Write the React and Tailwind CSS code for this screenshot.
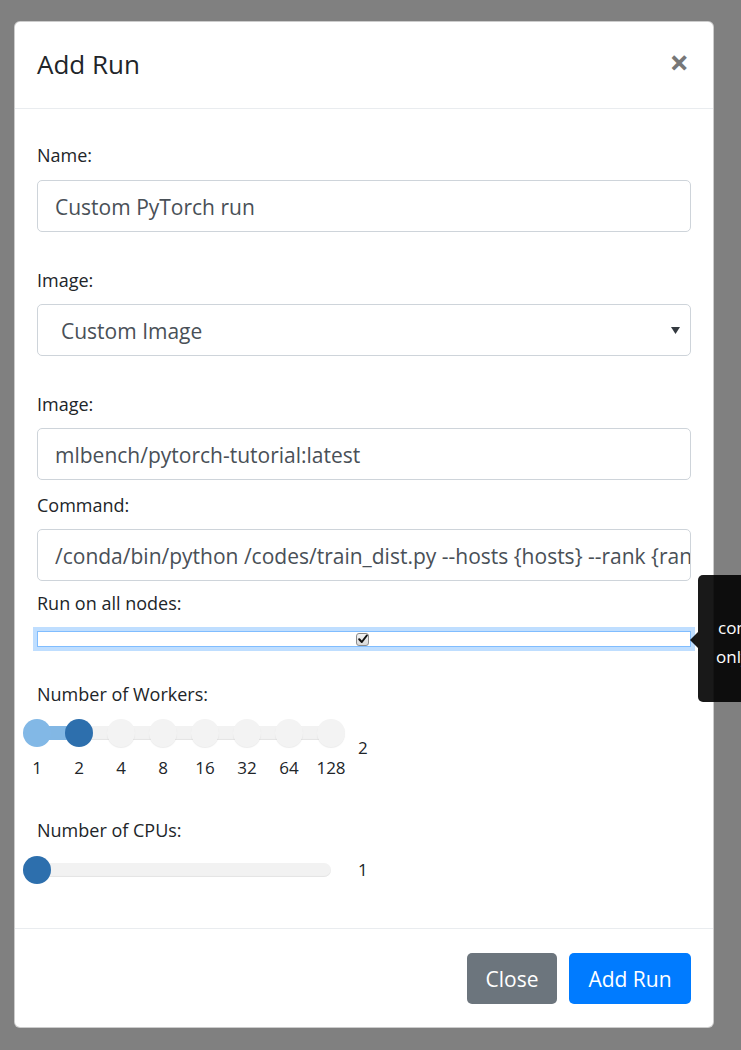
import React from "react";

const font = { fontFamily: '"Open Sans", "Noto Sans", sans-serif' };

function Label({ children, className = "" }) {
  return (
    <div className={"text-[18px] leading-[27px] text-[#212529] " + className}>{children}</div>
  );
}

function Input({ value, className = "" }) {
  return (
    <div
      className={
        "h-[52px] rounded-[5px] border border-[#ced4da] bg-white pl-[17px] pr-[4px] pt-[4px] flex items-center overflow-hidden whitespace-nowrap text-[21px] text-[#495057] " +
        className
      }
    >
      {value}
    </div>
  );
}

const workerMarks = ["1", "2", "4", "8", "16", "32", "64", "128"];

function WorkersSlider() {
  return (
    <div className="flex items-start">
      <div className="relative w-[322px] h-[60px] ml-[-14px] shrink-0">
        {/* rail */}
        <div className="absolute left-[14px] top-[7px] w-[294px] h-[14px] rounded-full bg-[#f2f2f2] shadow-[inset_0_-1px_1px_rgba(0,0,0,0.06)]" />
        {/* filled */}
        <div className="absolute left-[14px] top-[7px] w-[42px] h-[14px] bg-[#82b7e4]" />
        {workerMarks.map((m, i) => {
          const cls =
            i === 0
              ? "bg-[#82b8e6]"
              : i === 1
              ? "bg-[#2d6fad]"
              : "bg-[#f3f3f3] shadow-[0_1px_1px_rgba(0,0,0,0.08)]";
          return (
            <React.Fragment key={m}>
              <div
                className={"absolute top-0 w-[28px] h-[28px] rounded-full " + cls}
                style={{ left: i * 42 }}
              />
              <div
                className="absolute top-[37px] w-[40px] text-center text-[17px] leading-[24px] text-[#212529]"
                style={{ left: i * 42 - 6 }}
              >
                {m}
              </div>
            </React.Fragment>
          );
        })}
      </div>
      <div className="ml-[13px] mt-[17px] text-[17px] leading-[24px] text-[#212529]">2</div>
    </div>
  );
}

function CpuSlider() {
  return (
    <div className="flex items-center">
      <div className="relative w-[322px] h-[28px] ml-[-14px] shrink-0">
        <div className="absolute left-[14px] top-[7px] w-[294px] h-[14px] rounded-full bg-[#f2f2f2] shadow-[inset_0_-1px_1px_rgba(0,0,0,0.06)]" />
        <div className="absolute left-0 top-0 w-[28px] h-[28px] rounded-full bg-[#2d6fad]" />
      </div>
      <div className="ml-[13px] text-[17px] leading-[24px] text-[#212529]">1</div>
    </div>
  );
}

export default function App() {
  return (
    <div
      className="w-[741px] h-[1050px] overflow-hidden bg-[#808080] relative"
      style={font}
    >
      <div className="pt-[21px] pl-[14px]">
        <div className="w-[700px] h-[1007px] bg-white rounded-[6px] border border-[rgba(0,0,0,0.2)] flex flex-col">
          {/* header */}
          <div className="h-[87px] border-b border-[#e9ecef] flex items-center justify-between px-[22px] shrink-0">
            <div className="text-[26px] text-[#212529] leading-[36px] mt-[-3px]">Add Run</div>
            <div className="text-[34px] font-bold text-[#777] leading-none mr-[2px] mt-[-6px]">×</div>
          </div>
          {/* body */}
          <div className="px-[22px] pt-[33px] flex-1">
            <Label>Name:</Label>
            <Input value="Custom PyTorch run" className="mt-[11px]" />

            <Label className="mt-[35px]">Image:</Label>
            <div className="mt-[10px] h-[52px] rounded-[5px] border border-[#ced4da] bg-white pl-[23px] pr-[10px] flex items-center justify-between text-[21px] text-[#495057]">
              <span className="pt-[4px]">Custom Image</span>
              <svg width="9" height="7" viewBox="0 0 9 7">
                <path d="M0 0 L9 0 L4.5 7 Z" fill="#343a40" />
              </svg>
            </div>

            <Label className="mt-[35px]">Image:</Label>
            <Input value="mlbench/pytorch-tutorial:latest" className="mt-[10px]" />

            <Label className="mt-[12px]">Command:</Label>
            <Input
              value="/conda/bin/python /codes/train_dist.py --hosts {hosts} --rank {rank}"
              className="mt-[10px]"
            />

            <Label className="mt-[9px]">Run on all nodes:</Label>
            <div className="mt-[14px] h-[16px] border border-[#80bdff] bg-white shadow-[0_0_0_4px_rgba(0,123,255,0.25)] flex items-center justify-center">
              <div className="w-[13px] h-[13px] rounded-[3px] border border-[#8a8a8a] bg-gradient-to-b from-[#f4f4f4] to-[#d8d8d8] flex items-center justify-center ml-[-3px]">
                <svg width="10" height="10" viewBox="0 0 10 10">
                  <path d="M1.2 5.2 L3.8 8 L8.8 1.5" stroke="#111" strokeWidth="2" fill="none" strokeLinecap="round" strokeLinejoin="round" />
                </svg>
              </div>
            </div>

            <Label className="mt-[34px]">Number of Workers:</Label>
            <div className="mt-[11px]">
              <WorkersSlider />
            </div>

            <Label className="mt-[38px]">Number of CPUs:</Label>
            <div className="mt-[12px]">
              <CpuSlider />
            </div>
          </div>
          {/* footer */}
          <div className="h-[99px] border-t border-[#e9ecef] flex items-center justify-end gap-[12px] px-[22px] shrink-0">
            <button className="h-[51px] w-[90px] rounded-[5px] bg-[#6c757d] text-white text-[21px] pt-[4px]">Close</button>
            <button className="h-[51px] w-[122px] rounded-[5px] bg-[#007bff] text-white text-[21px] pt-[4px]">Add Run</button>
          </div>
        </div>
      </div>

      {/* tooltip */}
      <div className="absolute left-[698px] top-[575px]">
        <div className="absolute left-[-8px] top-[57px] w-0 h-0 border-y-[8px] border-y-transparent border-r-[8px] border-r-[rgba(0,0,0,0.9)]" />
        <div className="w-[220px] h-[127px] rounded-[5px] bg-[rgba(0,0,0,0.9)] text-white text-[17px] leading-[29px] pt-[9px] whitespace-nowrap">
          <div className="pl-[80px]">Run the</div>
          <div className="pl-[20px]">command on all</div>
          <div className="pl-[18px]">only one per</div>
          <div className="pl-[80px]">node</div>
        </div>
      </div>
    </div>
  );
}
